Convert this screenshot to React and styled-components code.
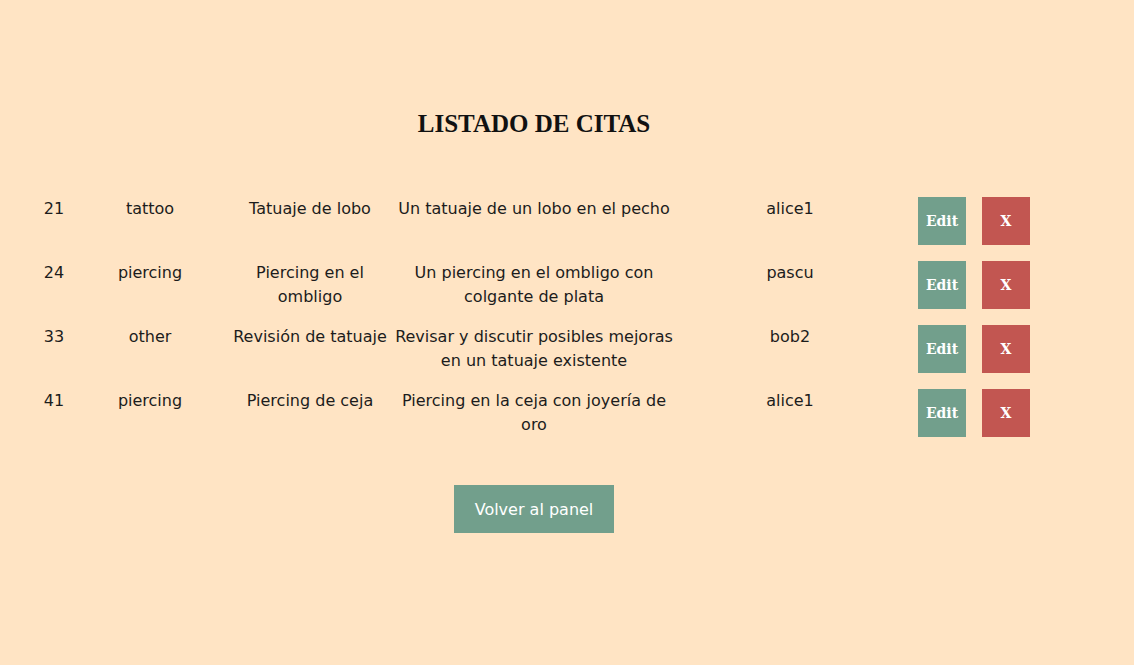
import { Fragment } from 'react';
import styled, { createGlobalStyle } from 'styled-components';

const GlobalStyle = createGlobalStyle`
  body {
    margin: 0;
    background: #ffe4c4;
    font-family: 'DejaVu Sans', Verdana, sans-serif;
    color: #1c1c1c;
  }
`;

const Page = styled.main`
  width: 1068px;
  min-height: 665px;
  padding-top: 108px;
  box-sizing: border-box;
  display: flex;
  flex-direction: column;
  align-items: center;
`;

const Title = styled.h1`
  margin: 0 0 57px;
  font-family: 'Liberation Serif', 'Times New Roman', serif;
  font-weight: 700;
  font-size: 25px;
  line-height: 32px;
  color: #111;
`;

const Table = styled.div`
  width: 1000px;
  display: grid;
  grid-template-columns: 40px 152px 168px 280px 232px 128px;
  row-gap: 16px;
`;

const Cell = styled.div`
  font-size: 16px;
  line-height: 24px;
  text-align: center;
`;

const Actions = styled.div`
  display: flex;
  gap: 16px;
  padding-left: 12px;
`;

const SquareButton = styled.button`
  width: 48px;
  height: 48px;
  border: none;
  padding: 0;
  background: ${(p) => (p.$danger ? '#c25651' : '#729f8c')};
  color: #fff;
  font-family: 'DejaVu Serif', Georgia, serif;
  font-weight: 700;
  font-size: 14px;
  cursor: pointer;
`;

const BackButton = styled.button`
  margin-top: 48px;
  width: 160px;
  height: 48px;
  border: none;
  background: #729f8c;
  color: #fff;
  font-family: 'DejaVu Sans', Verdana, sans-serif;
  font-size: 16px;
  cursor: pointer;
`;

const citas = [
  { id: 21, tipo: 'tattoo', titulo: 'Tatuaje de lobo', descripcion: 'Un tatuaje de un lobo en el pecho', usuario: 'alice1' },
  { id: 24, tipo: 'piercing', titulo: 'Piercing en el ombligo', descripcion: 'Un piercing en el ombligo con colgante de plata', usuario: 'pascu' },
  { id: 33, tipo: 'other', titulo: 'Revisión de tatuaje', descripcion: 'Revisar y discutir posibles mejoras en un tatuaje existente', usuario: 'bob2' },
  { id: 41, tipo: 'piercing', titulo: 'Piercing de ceja', descripcion: 'Piercing en la ceja con joyería de oro', usuario: 'alice1' },
];

export default function App() {
  return (
    <>
      <GlobalStyle />
      <Page>
        <Title>LISTADO DE CITAS</Title>
        <Table>
          {citas.map((c) => (
            <Fragment key={c.id}>
              <Cell>{c.id}</Cell>
              <Cell>{c.tipo}</Cell>
              <Cell>{c.titulo}</Cell>
              <Cell>{c.descripcion}</Cell>
              <Cell>{c.usuario}</Cell>
              <Actions>
                <SquareButton>Edit</SquareButton>
                <SquareButton $danger>X</SquareButton>
              </Actions>
            </Fragment>
          ))}
        </Table>
        <BackButton>Volver al panel</BackButton>
      </Page>
    </>
  );
}
